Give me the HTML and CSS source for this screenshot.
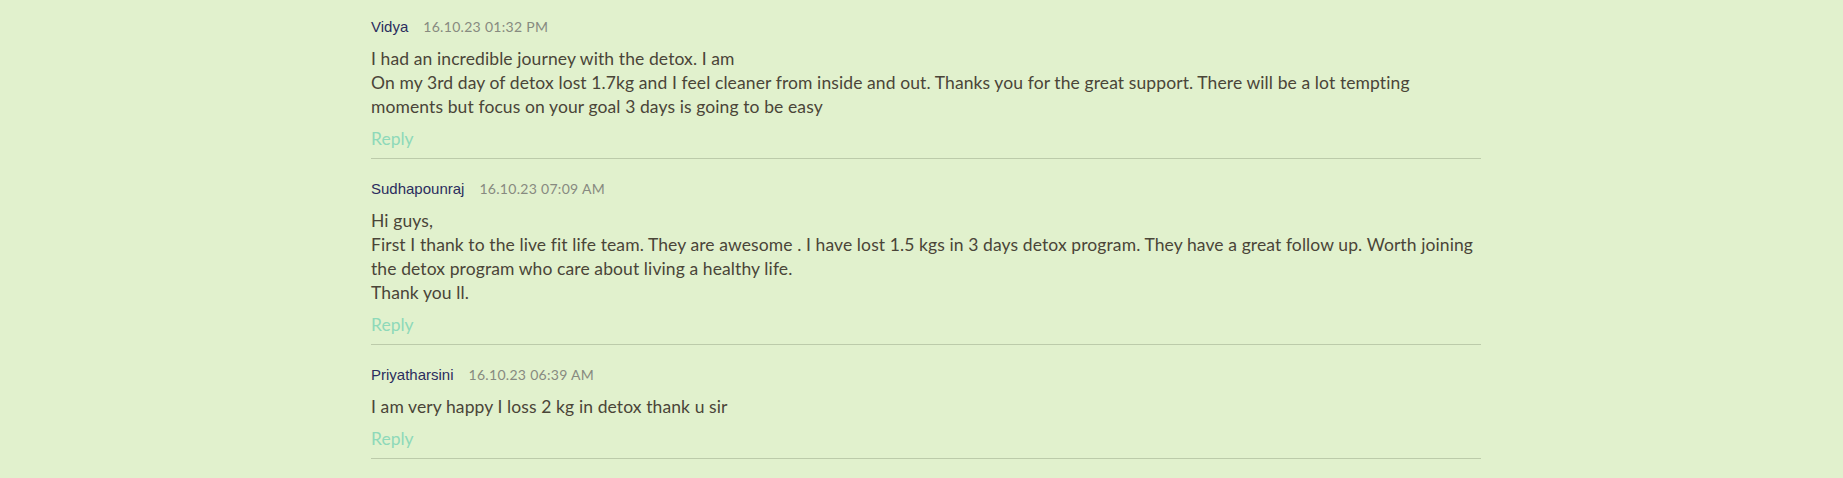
FILE: index.html
```html
<!DOCTYPE html>
<html lang="en">
<head>
    <meta charset="UTF-8">
    <meta name="viewport" content="width=device-width, initial-scale=1.0">
    <title>Comments</title>
    <link rel="stylesheet" href="styles.css">
</head>
<body>

    <div class="comments">
        <div class="comment">
            <div class="comment-head">
                <span class="author">Vidya</span>
                <span class="date">16.10.23 01:32 PM</span>
            </div>
            <p class="text">I had an incredible journey with the detox. I am<br>On my 3rd day of detox lost 1.7kg and I feel cleaner from inside and out. Thanks you for the great support. There will be a lot tempting moments but focus on your goal 3 days is going to be easy</p>
            <a class="reply" href="#">Reply</a>
        </div>

        <div class="comment">
            <div class="comment-head">
                <span class="author">Sudhapounraj</span>
                <span class="date">16.10.23 07:09 AM</span>
            </div>
            <p class="text">Hi guys,<br>First I thank to the live fit life team. They are awesome . I have lost 1.5 kgs in 3 days detox program. They have a great follow up. Worth joining the detox program who care about living a healthy life.<br>Thank you ll.</p>
            <a class="reply" href="#">Reply</a>
        </div>

        <div class="comment">
            <div class="comment-head">
                <span class="author">Priyatharsini</span>
                <span class="date">16.10.23 06:39 AM</span>
            </div>
            <p class="text">I am very happy I loss 2 kg in detox thank u sir</p>
            <a class="reply" href="#">Reply</a>
        </div>
    </div>

</body>
</html>
```

FILE: styles.css
```css
/* Page */
body {
    margin: 0;
    background-color: #e1f1cd;
    font-family: Lato, "Open Sans", sans-serif;
}

/* Comment list */
.comments {
    width: 1110px;
    margin-left: 371px;
}

.comment {
    padding: 18px 0 7px;
    border-bottom: 1px solid #bccbaa;
}
.comment:first-child {
    padding-top: 15px;
}

.comment-head {
    display: flex;
    align-items: baseline;
    gap: 15px;
    line-height: 24px;
}

.author {
    font-family: "Liberation Sans", Arial, sans-serif;
    font-size: 15px;
    color: #2b2d5e;
}

.date {
    font-size: 14px;
    letter-spacing: 0.3px;
    color: #878a80;
}

.text {
    margin: 8px 0 0;
    font-size: 17.5px;
    letter-spacing: 0.1px;
    line-height: 24px;
    color: #4a4538;
}

.reply {
    display: block;
    margin-top: 8px;
    font-size: 17.5px;
    line-height: 24px;
    color: #8ed9b9;
    text-decoration: none;
}
```
